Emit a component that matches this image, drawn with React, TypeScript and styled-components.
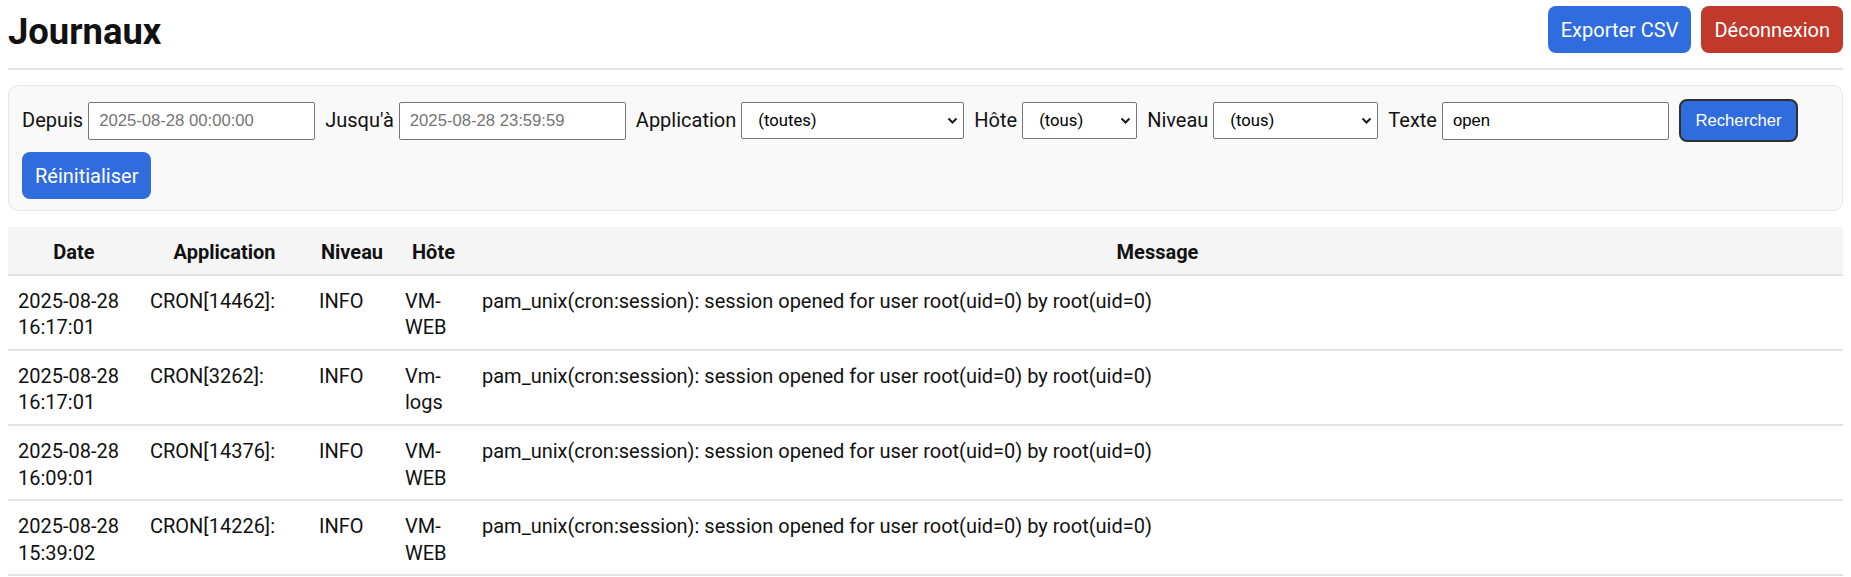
import React from 'react';
import styled, { createGlobalStyle } from 'styled-components';

type LogRow = {
  date: string;
  time: string;
  app: string;
  level: string;
  host: string;
  message: string;
};

const rows: LogRow[] = [
  {
    date: '2025-08-28',
    time: '16:17:01',
    app: 'CRON[14462]:',
    level: 'INFO',
    host: 'VM-WEB',
    message: 'pam_unix(cron:session): session opened for user root(uid=0) by root(uid=0)',
  },
  {
    date: '2025-08-28',
    time: '16:17:01',
    app: 'CRON[3262]:',
    level: 'INFO',
    host: 'Vm-logs',
    message: 'pam_unix(cron:session): session opened for user root(uid=0) by root(uid=0)',
  },
  {
    date: '2025-08-28',
    time: '16:09:01',
    app: 'CRON[14376]:',
    level: 'INFO',
    host: 'VM-WEB',
    message: 'pam_unix(cron:session): session opened for user root(uid=0) by root(uid=0)',
  },
  {
    date: '2025-08-28',
    time: '15:39:02',
    app: 'CRON[14226]:',
    level: 'INFO',
    host: 'VM-WEB',
    message: 'pam_unix(cron:session): session opened for user root(uid=0) by root(uid=0)',
  },
];

const GlobalStyle = createGlobalStyle`
  body {
    margin: 0;
    background: #fff;
    color: #111;
    font-family: Roboto, "Noto Sans", sans-serif;
    font-size: 20px;
    line-height: 26.6px;
  }
  * { box-sizing: border-box; }
`;

const Page = styled.div`
  padding: 0 8px;
`;

const Header = styled.header`
  display: flex;
  align-items: center;
  justify-content: space-between;
  padding: 6px 0 15px;
  border-bottom: 2px solid #e4e4e4;
`;

const Title = styled.h1`
  margin: 0;
  padding-top: 4px;
  font-size: 36.4px;
  font-weight: 700;
  line-height: 43px;
`;

const Actions = styled.div`
  display: flex;
  gap: 10px;
`;

const ActionButton = styled.button<{ $variant?: 'primary' | 'danger' }>`
  height: 47px;
  padding: 0 13px;
  border: none;
  border-radius: 8px;
  background: ${({ $variant }) => ($variant === 'danger' ? '#c0392b' : '#2f6ddf')};
  color: #fff;
  font-family: Roboto, "Noto Sans", sans-serif;
  font-size: 20px;
  cursor: pointer;
`;

const Filters = styled.form`
  display: flex;
  flex-wrap: wrap;
  align-items: center;
  gap: 10px;
  margin-top: 15px;
  padding: 13px 13px 11px;
  background: #f9f9f9;
  border: 1px solid #e6e6e6;
  border-radius: 10px;
`;

const Field = styled.label`
  display: inline-flex;
  align-items: center;
  gap: 5px;
`;

const TextInput = styled.input`
  width: 227px;
  height: 38px;
  padding: 0 10px;
  border: 1px solid #767676;
  border-radius: 2px;
  background: #fff;
  color: #000;
  font-family: "Liberation Sans", Arial, sans-serif;
  font-size: 16.67px;

  &::placeholder {
    color: #757575;
  }
`;

const SelectWrap = styled.span`
  position: relative;
  display: inline-flex;
`;

const Select = styled.select<{ $width: number }>`
  appearance: none;
  width: ${({ $width }) => $width}px;
  height: 37px;
  padding: 0 24px 0 16px;
  border: 1px solid #767676;
  border-radius: 2px;
  background: #fff;
  color: #000;
  font-family: Roboto, "Noto Sans", sans-serif;
  font-size: 16.67px;
`;

const Chevron = styled.svg`
  position: absolute;
  right: 6px;
  top: 50%;
  margin-top: -4px;
  pointer-events: none;
`;

const SearchButton = styled.button`
  height: 43px;
  padding: 0 14.5px;
  border: 2px solid #2f2f2f;
  border-radius: 8px;
  background: #2f6ddf;
  color: #fff;
  font-family: "Liberation Sans", Arial, sans-serif;
  font-size: 16.67px;
`;

const Table = styled.table`
  width: 100%;
  margin-top: 16px;
  border-collapse: collapse;
  table-layout: fixed;
`;

const Th = styled.th`
  padding: 12px 10px 8px;
  background: #f5f5f5;
  border-bottom: 2px solid #e4e4e4;
  font-weight: 700;
  text-align: center;
`;

const Td = styled.td`
  padding: 12px 10px 8px;
  border-bottom: 2px solid #e4e4e4;
  vertical-align: top;
  text-align: left;
`;

const ChevronIcon = () => (
  <Chevron width="11" height="8" viewBox="0 0 11 8">
    <polyline points="1.5,1.5 5.5,5.5 9.5,1.5" fill="none" stroke="#1a1a1a" strokeWidth="2" />
  </Chevron>
);

const SelectField: React.FC<{ label: string; width: number; value: string }> = ({
  label,
  width,
  value,
}) => (
  <Field>
    {label}
    <SelectWrap>
      <Select $width={width} defaultValue={value}>
        <option>{value}</option>
      </Select>
      <ChevronIcon />
    </SelectWrap>
  </Field>
);

export default function App() {
  return (
    <Page>
      <GlobalStyle />
      <Header>
        <Title>Journaux</Title>
        <Actions>
          <ActionButton>Exporter CSV</ActionButton>
          <ActionButton $variant="danger">Déconnexion</ActionButton>
        </Actions>
      </Header>

      <Filters onSubmit={(e) => e.preventDefault()}>
        <Field>
          Depuis
          <TextInput placeholder="2025-08-28 00:00:00" />
        </Field>
        <Field>
          Jusqu'à
          <TextInput placeholder="2025-08-28 23:59:59" />
        </Field>
        <SelectField label="Application" width={223} value="(toutes)" />
        <SelectField label="Hôte" width={115} value="(tous)" />
        <SelectField label="Niveau" width={165} value="(tous)" />
        <Field>
          Texte
          <TextInput defaultValue="open" />
        </Field>
        <SearchButton type="submit">Rechercher</SearchButton>
        <ActionButton type="button">Réinitialiser</ActionButton>
      </Filters>

      <Table>
        <colgroup>
          <col style={{ width: 132 }} />
          <col style={{ width: 169 }} />
          <col style={{ width: 86 }} />
          <col style={{ width: 77 }} />
          <col />
        </colgroup>
        <thead>
          <tr>
            <Th>Date</Th>
            <Th>Application</Th>
            <Th>Niveau</Th>
            <Th>Hôte</Th>
            <Th>Message</Th>
          </tr>
        </thead>
        <tbody>
          {rows.map((r, i) => (
            <tr key={i}>
              <Td>
                {r.date} {r.time}
              </Td>
              <Td>{r.app}</Td>
              <Td>{r.level}</Td>
              <Td>{r.host}</Td>
              <Td>{r.message}</Td>
            </tr>
          ))}
        </tbody>
      </Table>
    </Page>
  );
}
